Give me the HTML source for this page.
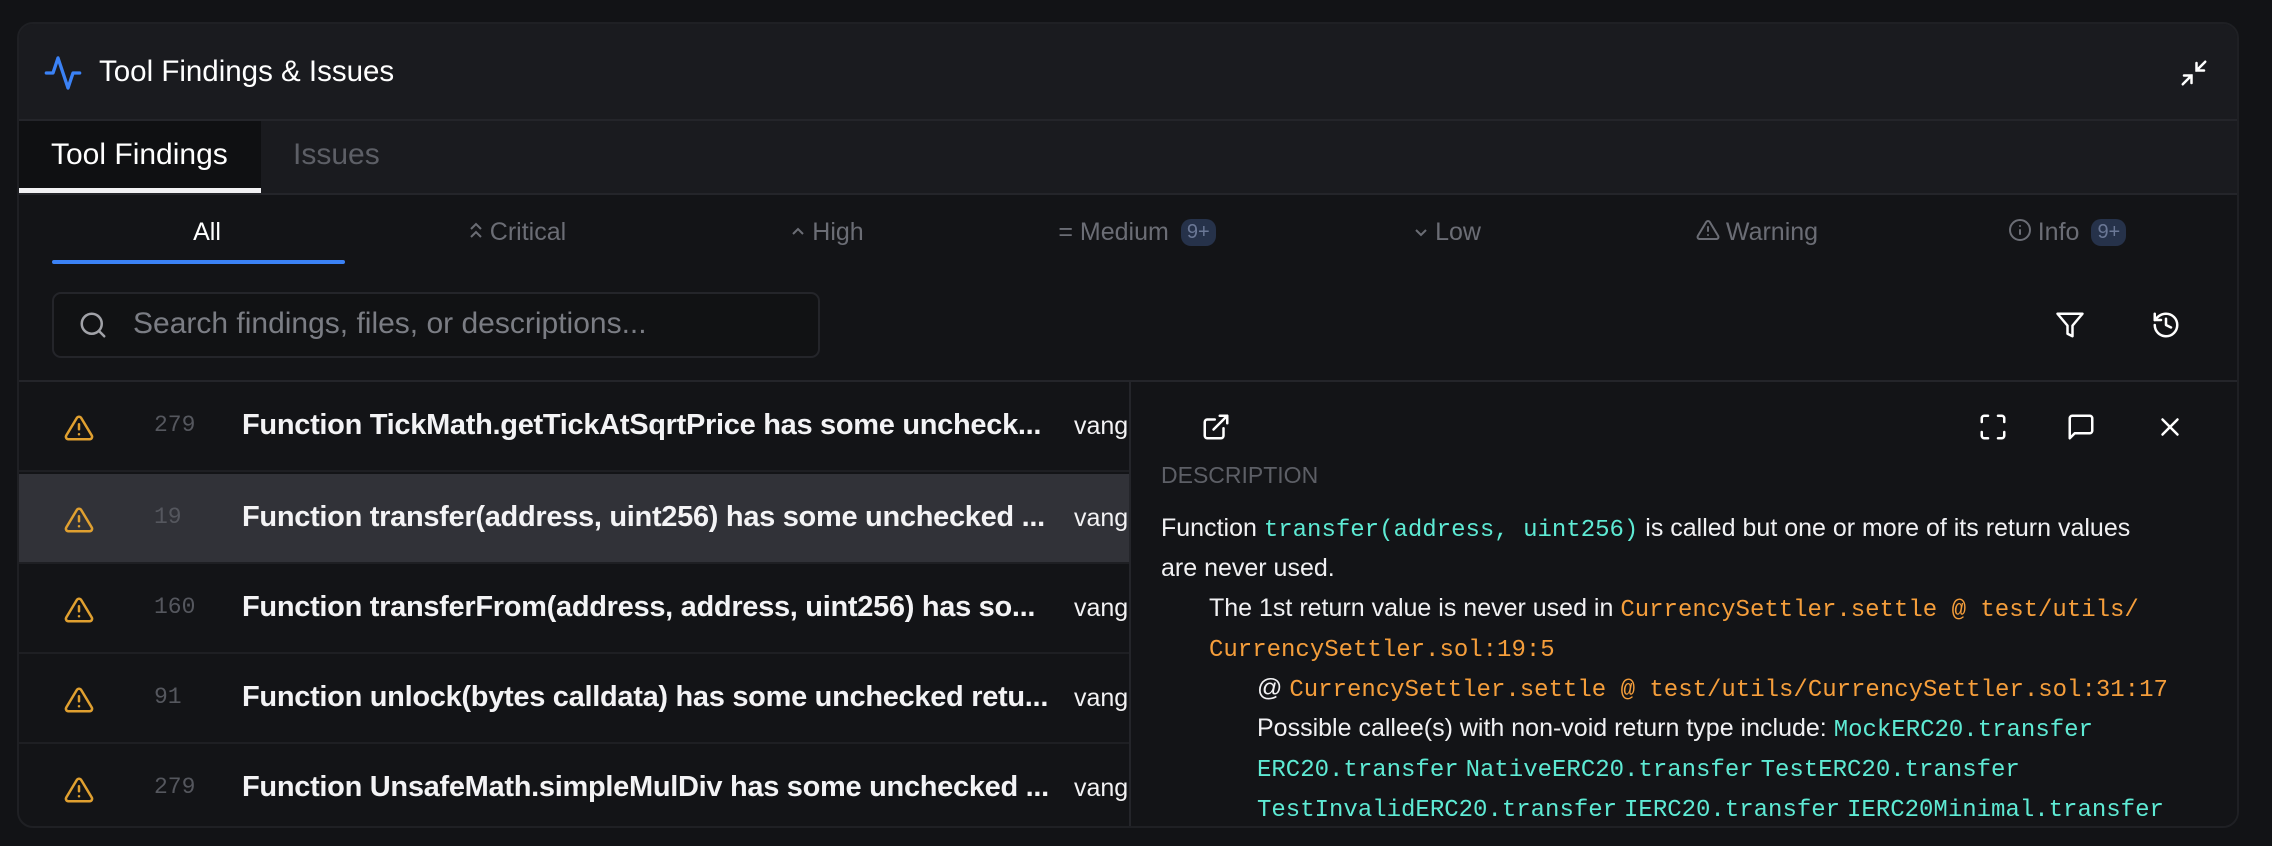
<!DOCTYPE html>
<html><head><meta charset="utf-8">
<style>
*{box-sizing:border-box;margin:0;padding:0}
html,body{width:2272px;height:846px;background:#121316;overflow:hidden;font-family:"Liberation Sans",sans-serif;color:#f1f1f3}
.abs{position:absolute}
.panel{position:absolute;left:17px;top:22px;width:2222px;height:806px;border:2px solid #1f2024;border-radius:16px;background:#131417;overflow:hidden}
.hdr{position:absolute;left:0;top:0;width:100%;height:97px;background:#1a1b1f;border-bottom:2px solid #24252a}
.tabs{position:absolute;left:0;top:97px;width:100%;height:74px;background:#1a1b1f;border-bottom:2px solid #24252a}
.ftab{position:absolute;top:194px;width:310px;text-align:center;font-size:25px;color:#6b6d75;white-space:nowrap}
.ftab svg{vertical-align:-2px;margin-right:6px}
.badge{display:inline-block;background:#26324a;color:#6b7896;border-radius:10px;font-size:20px;padding:2px 6px;margin-left:12px;vertical-align:2px}
.row{position:absolute;left:0;width:1110px;height:90px;border-bottom:2px solid #1e1f23}
.row .num{position:absolute;left:135px;top:30px;font-family:"Liberation Mono",monospace;font-size:23px;color:#55575e}
.row .t{position:absolute;left:223px;top:27px;font-size:29px;font-weight:bold;color:#f3f3f5;letter-spacing:-0.3px;white-space:nowrap}
.row .v{position:absolute;left:1055px;top:30px;font-size:25px;color:#f3f3f5}
.row svg{position:absolute;left:45px;top:31px}
.mono{font-family:"Liberation Mono",monospace;font-size:24px}
.g{color:#5eead4}.o{color:#f59e3b}
.dl{position:absolute;font-size:25px;color:#f1f1f3;white-space:nowrap}
</style></head><body>
<div class="panel">
 <div class="hdr">
  <svg class="abs" style="left:24px;top:29px" width="40" height="40" viewBox="0 0 24 24" fill="none" stroke="#3b82f6" stroke-width="2" stroke-linecap="round" stroke-linejoin="round"><path d="M22 12h-4l-3 9L9 3l-3 9H2"/></svg>
  <div class="abs" style="left:80px;top:31px;font-size:29.5px;color:#fff">Tool Findings &amp; Issues</div>
  <svg class="abs" style="left:2160px;top:34px" width="30" height="30" viewBox="0 0 24 24" fill="none" stroke="#fff" stroke-width="2" stroke-linecap="round"><path d="M4 14h6v6M20 10h-6V4M14 10l7-7M3 21l7-7"/></svg>
 </div>
 <div class="tabs">
  <div class="abs" style="left:0;top:0;width:242px;height:72px;background:#0f1012;border-bottom:5px solid #f1f1f3"></div>
  <div class="abs" style="left:32px;top:17px;font-size:30px;color:#fff">Tool Findings</div>
  <div class="abs" style="left:274px;top:17px;font-size:30px;color:#5d5f66">Issues</div>
 </div>
 <div class="ftab" style="left:33px;color:#fff">All</div>
 <div class="abs" style="left:33px;top:236px;width:293px;height:4px;background:#3b82f6;border-radius:2px"></div>
 <div class="ftab" style="left:343px"><svg width="16" height="22" viewBox="0 0 16 22" fill="none" stroke="#6b6d75" stroke-width="2"><path d="M3 9l5-5 5 5M3 17l5-5 5 5"/></svg>Critical</div>
 <div class="ftab" style="left:653px"><svg width="16" height="20" viewBox="0 0 16 20" fill="none" stroke="#6b6d75" stroke-width="2"><path d="M3 12l5-5 5 5"/></svg>High</div>
 <div class="ftab" style="left:963px">= Medium<span class="badge">9+</span></div>
 <div class="ftab" style="left:1273px"><svg width="16" height="20" viewBox="0 0 16 20" fill="none" stroke="#6b6d75" stroke-width="2"><path d="M3 8l5 5 5-5"/></svg>Low</div>
 <div class="ftab" style="left:1583px"><svg width="24" height="24" viewBox="0 0 24 24" fill="none" stroke="#6b6d75" stroke-width="2" stroke-linecap="round" stroke-linejoin="round"><path d="M10.3 3.9L1.8 18a2 2 0 0 0 1.7 3h17a2 2 0 0 0 1.7-3L13.7 3.9a2 2 0 0 0-3.4 0zM12 9v4M12 17h.01"/></svg>Warning</div>
 <div class="ftab" style="left:1893px"><svg width="24" height="24" viewBox="0 0 24 24" fill="none" stroke="#6b6d75" stroke-width="2" stroke-linecap="round"><circle cx="12" cy="12" r="10"/><path d="M12 16v-4M12 8h.01"/></svg>Info<span class="badge">9+</span></div>
 <div class="abs" style="left:33px;top:268px;width:768px;height:66px;border:2px solid #24252a;border-radius:9px;background:#111214"></div>
 <svg class="abs" style="left:59px;top:286px" width="30" height="30" viewBox="0 0 24 24" fill="none" stroke="#a1a2a8" stroke-width="2" stroke-linecap="round"><circle cx="11" cy="11" r="8"/><path d="M21 21l-4.3-4.3"/></svg>
 <div class="abs" style="left:114px;top:283px;font-size:30px;color:#7b7d84">Search findings, files, or descriptions...</div>
 <svg class="abs" style="left:2036px;top:286px" width="30" height="30" viewBox="0 0 24 24" fill="none" stroke="#fff" stroke-width="2" stroke-linejoin="round"><path d="M22 3H2l8 9.5V19l4 2v-8.5L22 3z"/></svg>
 <svg class="abs" style="left:2132px;top:286px" width="30" height="30" viewBox="0 0 24 24" fill="none" stroke="#fff" stroke-width="2" stroke-linecap="round" stroke-linejoin="round"><path d="M3 12a9 9 0 1 0 9-9 9.750 9.750 0 0 0-6.74 2.74L3 8"/><path d="M3 3v5h5M12 7v5l4 2"/></svg>
 <div class="abs" style="left:0;top:356px;width:100%;height:2px;background:#24252a"></div>

 <div class="row" style="top:358px"><svg width="30" height="30" viewBox="0 0 24 24" fill="none" stroke="#e0a030" stroke-width="2" stroke-linecap="round" stroke-linejoin="round"><path d="M10.3 3.9L1.8 18a2 2 0 0 0 1.7 3h17a2 2 0 0 0 1.7-3L13.7 3.9a2 2 0 0 0-3.4 0zM12 9v4M12 17h.01"/></svg><span class="num">279</span><span class="t">Function TickMath.getTickAtSqrtPrice has some uncheck...</span><span class="v">vang</span></div>
 <div class="row" style="top:450px;background:#313238"><svg width="30" height="30" viewBox="0 0 24 24" fill="none" stroke="#e0a030" stroke-width="2" stroke-linecap="round" stroke-linejoin="round"><path d="M10.3 3.9L1.8 18a2 2 0 0 0 1.7 3h17a2 2 0 0 0 1.7-3L13.7 3.9a2 2 0 0 0-3.4 0zM12 9v4M12 17h.01"/></svg><span class="num">19</span><span class="t">Function transfer(address, uint256) has some unchecked ...</span><span class="v">vang</span></div>
 <div class="row" style="top:540px"><svg width="30" height="30" viewBox="0 0 24 24" fill="none" stroke="#e0a030" stroke-width="2" stroke-linecap="round" stroke-linejoin="round"><path d="M10.3 3.9L1.8 18a2 2 0 0 0 1.7 3h17a2 2 0 0 0 1.7-3L13.7 3.9a2 2 0 0 0-3.4 0zM12 9v4M12 17h.01"/></svg><span class="num">160</span><span class="t">Function transferFrom(address, address, uint256) has so...</span><span class="v">vang</span></div>
 <div class="row" style="top:630px"><svg width="30" height="30" viewBox="0 0 24 24" fill="none" stroke="#e0a030" stroke-width="2" stroke-linecap="round" stroke-linejoin="round"><path d="M10.3 3.9L1.8 18a2 2 0 0 0 1.7 3h17a2 2 0 0 0 1.7-3L13.7 3.9a2 2 0 0 0-3.4 0zM12 9v4M12 17h.01"/></svg><span class="num">91</span><span class="t">Function unlock(bytes calldata) has some unchecked retu...</span><span class="v">vang</span></div>
 <div class="row" style="top:720px"><svg width="30" height="30" viewBox="0 0 24 24" fill="none" stroke="#e0a030" stroke-width="2" stroke-linecap="round" stroke-linejoin="round"><path d="M10.3 3.9L1.8 18a2 2 0 0 0 1.7 3h17a2 2 0 0 0 1.7-3L13.7 3.9a2 2 0 0 0-3.4 0zM12 9v4M12 17h.01"/></svg><span class="num">279</span><span class="t">Function UnsafeMath.simpleMulDiv has some unchecked ...</span><span class="v">vang</span></div>

 <div class="abs" style="left:1110px;top:358px;width:1112px;height:448px;background:#131417;border-left:2px solid #24252a">
  <svg class="abs" style="left:70px;top:30px" width="30" height="30" viewBox="0 0 24 24" fill="none" stroke="#fff" stroke-width="2" stroke-linecap="round" stroke-linejoin="round"><path d="M15 3h6v6M10 14L21 3M18 13v6a2 2 0 0 1-2 2H5a2 2 0 0 1-2-2V8a2 2 0 0 1 2-2h6"/></svg>
  <svg class="abs" style="left:847px;top:30px" width="30" height="30" viewBox="0 0 24 24" fill="none" stroke="#fff" stroke-width="2" stroke-linecap="round"><path d="M8 3H5a2 2 0 0 0-2 2v3M21 8V5a2 2 0 0 0-2-2h-3M3 16v3a2 2 0 0 0 2 2h3M16 21h3a2 2 0 0 0 2-2v-3"/></svg>
  <svg class="abs" style="left:935px;top:30px" width="30" height="30" viewBox="0 0 24 24" fill="none" stroke="#fff" stroke-width="2" stroke-linejoin="round"><path d="M21 15a2 2 0 0 1-2 2H7l-4 4V5a2 2 0 0 1 2-2h14a2 2 0 0 1 2 2z"/></svg>
  <svg class="abs" style="left:1024px;top:30px" width="30" height="30" viewBox="0 0 24 24" fill="none" stroke="#fff" stroke-width="2" stroke-linecap="round"><path d="M18 6L6 18M6 6l12 12"/></svg>
  <div class="abs" style="left:30px;top:80px;font-size:23px;color:#5d5f66">DESCRIPTION</div>
  <div class="dl" style="left:30px;top:132px">Function <span class="mono g">transfer(address, uint256)</span> is called but one or more of its return values</div>
  <div class="dl" style="left:30px;top:172px">are never used.</div>
  <div class="dl" style="left:78px;top:212px">The 1st return value is never used in <span class="mono o">CurrencySettler.settle @ test/utils/</span></div>
  <div class="dl" style="left:78px;top:252px"><span class="mono o">CurrencySettler.sol:19:5</span></div>
  <div class="dl" style="left:126px;top:292px">@ <span class="mono o">CurrencySettler.settle @ test/utils/CurrencySettler.sol:31:17</span></div>
  <div class="dl" style="left:126px;top:332px">Possible callee(s) with non-void return type include: <span class="mono g">MockERC20.transfer</span></div>
  <div class="dl" style="left:126px;top:372px"><span class="mono g">ERC20.transfer</span> <span class="mono g">NativeERC20.transfer</span> <span class="mono g">TestERC20.transfer</span></div>
  <div class="dl" style="left:126px;top:412px"><span class="mono g">TestInvalidERC20.transfer</span> <span class="mono g">IERC20.transfer</span> <span class="mono g">IERC20Minimal.transfer</span></div>
 </div>
</div>
</body></html>
